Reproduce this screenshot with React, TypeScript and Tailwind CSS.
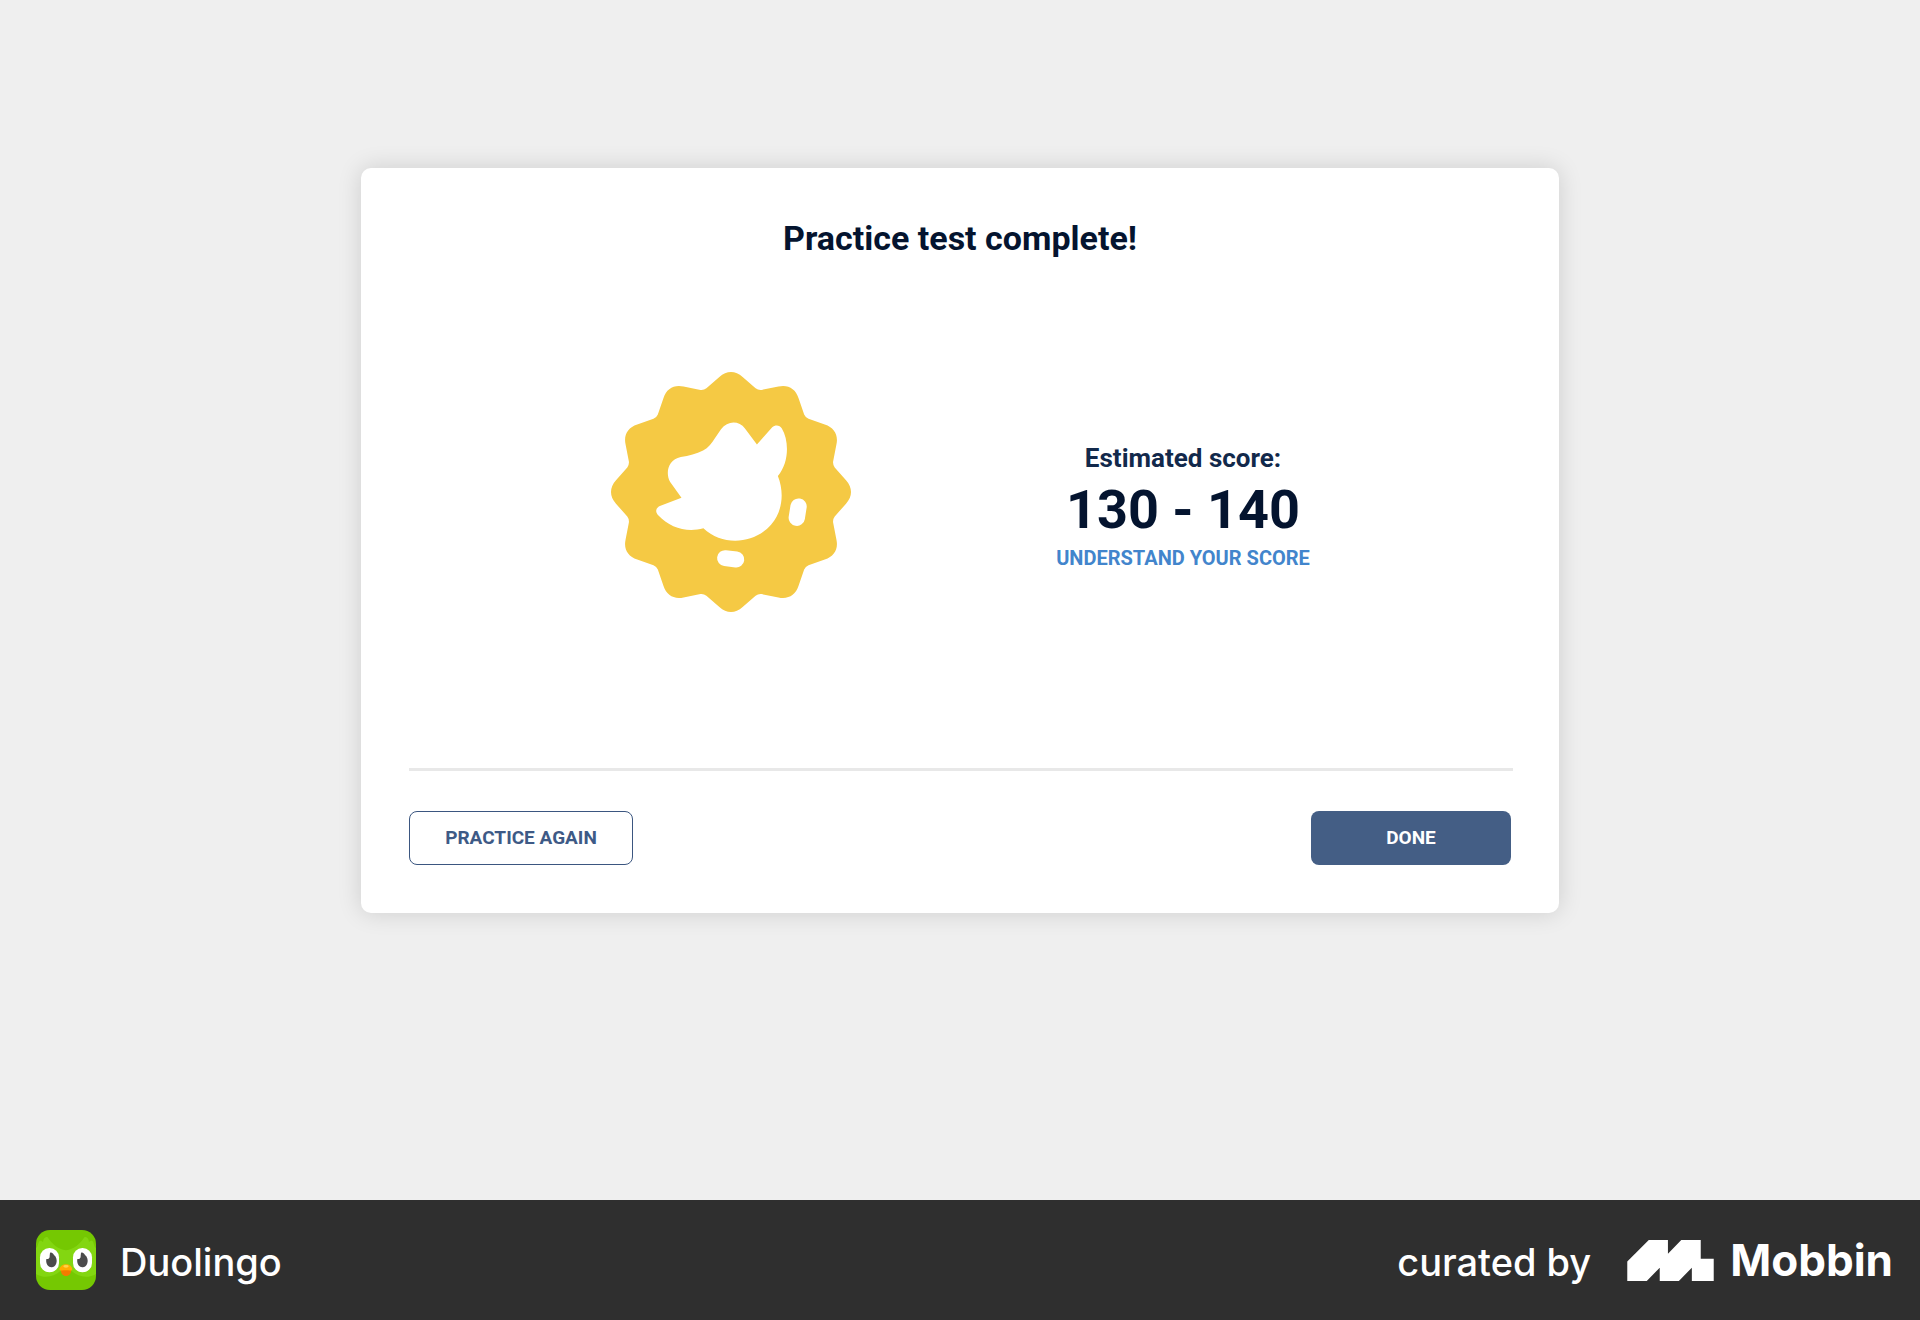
type Point = [number, number];

const CENTER = 361;

function sealPath(): string {
  const turn = ([x, y]: Point, step: number) => {
    const a = (step * Math.PI) / 6;
    const px = CENTER + x * Math.cos(a) - y * Math.sin(a);
    const py = CENTER + x * Math.sin(a) + y * Math.cos(a);
    return `${px.toFixed(1)} ${py.toFixed(1)}`;
  };
  let d = `M${turn([-74, -312], 0)}`;
  for (let i = 0; i < 12; i++) {
    d += `L${turn([-35, -346], i)}`;
    d += `C${turn([-13, -366], i)} ${turn([13, -366], i)} ${turn([35, -346], i)}`;
    d += `L${turn([74, -312], i)}`;
    d += `Q${turn([82, -306], i)} ${turn([-74, -312], i + 1)}`;
  }
  return d + "Z";
}

function Seal() {
  return (
    <svg viewBox="0 0 722 722" className="size-60" role="img" aria-label="Practice test badge">
      <path d={sealPath()} fill="#f5c944" />
      <g fill="#fff" transform="translate(-33 -36)">
        <path d="M472 254L436 206C418 182 384 182 364 208L345 236C336 251 326 264 310 272C290 282 268 287 243 292C204 301 196 340 211 367L245 414L182 438C166 444 166 458 175 467C210 505 262 520 311 506C370 562 465 553 515 495C549 455 555 400 535 349C568 310 570 245 547 206C541 195 527 194 518 202Z" />
        <rect x="570" y="416" width="49" height="83" rx="24" transform="rotate(9 594 458)" />
        <rect x="352" y="574" width="82" height="48" rx="24" transform="rotate(7 393 598)" />
      </g>
    </svg>
  );
}

function OwlIcon() {
  return (
    <svg viewBox="0 0 180 180" className="size-15 rounded-[14px]" aria-hidden="true">
      <rect width="180" height="180" fill="#75c802" />
      <path
        d="M0 54C6 51 6 39 10 34C14 31 18 33 21 37C22 26 27 19 35 22C48 42 66 58 90 61C114 58 132 42 145 22C153 19 158 26 159 37C162 33 166 31 170 34C174 39 174 51 180 54V132C158 146 126 142 108 124H72C54 142 22 146 0 132Z"
        fill="#83d611"
      />
      <rect x="12" y="54" width="57" height="73" rx="28" fill="#fff" />
      <rect x="111" y="54" width="57" height="73" rx="28" fill="#fff" />
      <path
        d="M42 69C45 66 51 69 54 75C61 80 64 91 61 100C58 110 50 113 43 111C34 109 29 99 31 87C37 88 42 84 41 77Z"
        fill="#4b4b4b"
      />
      <path
        d="M135 69C138 66 144 69 147 75C154 80 157 91 154 100C151 110 143 113 136 111C127 109 122 99 124 87C130 88 135 84 134 77Z"
        fill="#4b4b4b"
      />
      <path d="M74 119H106C105 131 100 138 90 138S75 131 74 119Z" fill="#f47b00" />
      <path d="M70 117C73 108 80 103 90 103S107 108 109 117C109 123 101 121 90 121S70 123 70 117Z" fill="#ffae00" />
      <ellipse cx="90" cy="109" rx="8" ry="4" fill="#ffd34a" />
    </svg>
  );
}

function MobbinMark() {
  return (
    <svg viewBox="0 0 253 120" className="h-[41px] w-[87px]" fill="#fff" aria-hidden="true">
      <path d="M0 63L63 0H119V40L158 0H215V55H253V120H189V81L151 120H95V81L57 120H0Z" />
    </svg>
  );
}

export default function App() {
  return (
    <div className="flex min-h-screen flex-col bg-[#efefef] font-['Roboto',sans-serif]">
      <main className="flex grow items-start justify-center px-6 pt-42 pb-12">
        <section className="flex w-full max-w-[1198px] flex-col rounded-[10px] bg-white px-12 pt-12 pb-12 shadow-[0_0_24px_rgba(0,0,0,0.14)]">
          <h1 className="text-center text-[34px] leading-[44px] font-bold text-[#04142f]">
            Practice test complete!
          </h1>
          <div className="mx-auto mt-28 grid w-full max-w-[904px] grid-cols-2 items-center pr-1">
            <div className="flex justify-center pr-1">
              <Seal />
            </div>
            <div className="flex flex-col items-center pt-7 font-bold">
              <h2 className="text-[26px] leading-8 text-[#12294b]">Estimated score:</h2>
              <p className="py-2 text-[54px] leading-14 text-[#04142f]">130 - 140</p>
              <a href="#score" className="text-[20px] leading-6 text-[#4285cc]">
                UNDERSTAND YOUR SCORE
              </a>
            </div>
          </div>
          <hr className="mt-[156px] -mr-0.5 border-t-3 border-[#e8e8e8]" />
          <div className="mt-10 flex items-center justify-between">
            <button
              type="button"
              className="h-[54px] w-56 rounded-lg border border-[#3b5680] text-[19px] font-bold text-[#3e5a86]"
            >
              PRACTICE AGAIN
            </button>
            <button
              type="button"
              className="h-[54px] w-50 rounded-lg bg-[#445e85] text-[19px] font-bold text-white"
            >
              DONE
            </button>
          </div>
        </section>
      </main>
      <footer className="flex h-30 items-center justify-between bg-[#2f2f2f] pr-[27px] pl-9 font-['Inter',sans-serif] text-white">
        <div className="flex items-center gap-6">
          <OwlIcon />
          <span className="pt-1 text-[38px] leading-12 font-medium">Duolingo</span>
        </div>
        <div className="flex items-center">
          <span className="pt-1 text-[38px] leading-12 font-medium">curated by</span>
          <a href="#mobbin" className="ml-9 flex items-center gap-4">
            <MobbinMark />
            <span className="text-[44px] leading-12 font-bold">Mobbin</span>
          </a>
        </div>
      </footer>
    </div>
  );
}
